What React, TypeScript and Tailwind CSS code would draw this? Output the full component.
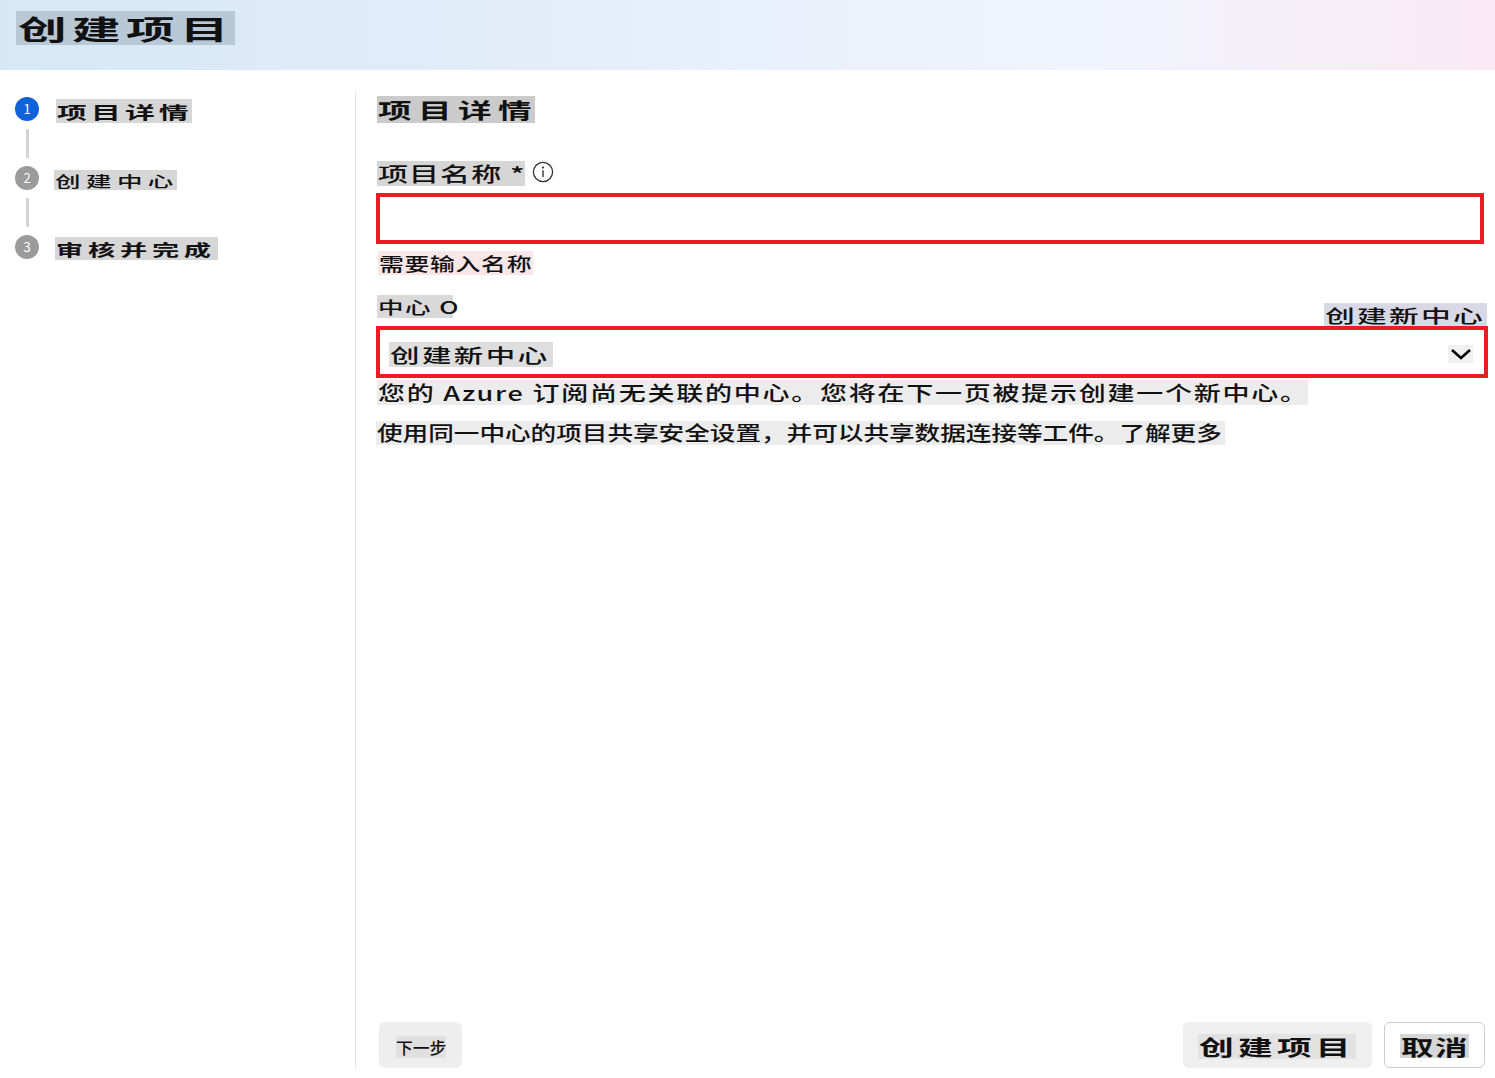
import React from "react";

function Hl({ box, inner, children }: { box: string; inner: string; children: React.ReactNode }) {
  return (
    <span className={"inline-flex items-center shrink-0 overflow-visible " + box}>
      <span className={"inline-block whitespace-nowrap origin-left leading-none " + inner}>{children}</span>
    </span>
  );
}

function InfoIcon() {
  return (
    <svg width="22" height="22" viewBox="0 0 22 22" className="ml-[7px] shrink-0">
      <circle cx="11" cy="11" r="9.6" fill="none" stroke="#333" strokeWidth="1.3" />
      <circle cx="11" cy="6.6" r="1.1" fill="#333" />
      <line x1="11" y1="9.2" x2="11" y2="16" stroke="#333" strokeWidth="1.4" />
    </svg>
  );
}

export default function App() {
  return (
    <div className="w-[1495px] h-[1078px] bg-white text-[#111] font-['Noto_Sans_CJK_SC','Noto_Sans',sans-serif] flex flex-col overflow-hidden">
      <header className="h-[70px] shrink-0 bg-linear-to-r from-[#d6e7f6] via-[#f0f4fd] via-[73%] to-[#f9e9f5] pl-[16px] pt-[11px]">
        <Hl box="w-[219px] h-[34px] bg-[#b8c8d6] pl-[2px]" inner="text-[27px] font-bold tracking-[3px] [transform:scaleX(1.8)]">
          创建项目
        </Hl>
      </header>

      <div className="flex flex-1 pt-[22px] pb-[10px]">
        <aside className="w-[356px] shrink-0 border-r border-[#e3e3e3] pl-[15px] pt-[5px] flex flex-col">
          <div className="flex items-start h-6">
            <div className="w-6 h-6 shrink-0 rounded-full bg-[#0f62d9] text-white text-[13px] flex items-center justify-center">1</div>
            <Hl box="ml-[17px] mt-[2px] w-[136px] h-[24px] bg-[#d6d6d6] pl-[1px]" inner="text-[17px] font-semibold tracking-[2.4px] [transform:scaleX(1.75)]">
              项目详情
            </Hl>
          </div>
          <div className="ml-[11px] w-[3px] h-[29px] my-[8px] bg-[#d4d4d4]" />
          <div className="flex items-start h-6">
            <div className="w-6 h-6 shrink-0 rounded-full bg-[#9b9b9b] text-white text-[13px] flex items-center justify-center">2</div>
            <Hl box="ml-[15px] mt-[4px] w-[123px] h-[20px] bg-[#d6d6d6] pl-[1px]" inner="text-[15px] font-medium tracking-[3.2px] [transform:scaleX(1.7)]">
              创建中心
            </Hl>
          </div>
          <div className="ml-[11px] w-[3px] h-[29px] my-[8px] bg-[#d4d4d4]" />
          <div className="flex items-start h-6">
            <div className="w-6 h-6 shrink-0 rounded-full bg-[#9b9b9b] text-white text-[13px] flex items-center justify-center">3</div>
            <Hl box="ml-[16px] mt-[2px] w-[163px] h-[23px] bg-[#d6d6d6] pl-[1px]" inner="text-[16px] font-semibold tracking-[2.8px] [transform:scaleX(1.7)]">
              审核并完成
            </Hl>
          </div>
        </aside>

        <main className="flex-1 flex flex-col pl-[20px] pr-[7px]">
          <Hl box="mt-[4px] ml-[1px] w-[158px] h-[27px] bg-[#cbcbcb] pl-[1px]" inner="text-[21px] font-bold tracking-[4px] [transform:scaleX(1.6)]">
            项目详情
          </Hl>

          <div className="mt-[38px] flex items-start">
            <Hl box="ml-[1px] w-[148px] h-[25px] bg-[#d6d6d6] pl-[1px]" inner="text-[20px] font-medium tracking-[0.7px] [transform:scaleX(1.5)]">
              项目名称 *
            </Hl>
            <InfoIcon />
          </div>

          <div className="mt-[7px] w-[1108px] h-[51px] border-4 border-[#ed1c24] bg-white" />

          <Hl box="mt-[7px] ml-[2px] w-[155px] h-[24px] bg-[#f9e6e7] pl-[1px]" inner="text-[18px] font-medium tracking-[0.5px] [transform:scaleX(1.38)]">
            需要输入名称
          </Hl>

          <div className="mt-[20px] h-[31px] flex justify-between">
            <Hl box="self-start ml-[1px] w-[76px] h-[23px] bg-[#d9d9d9] pl-[1px]" inner="text-[17px] font-medium tracking-[1px] [transform:scaleX(1.5)]">
              中心 O
            </Hl>
            <Hl box="self-end mr-[1px] w-[163px] h-[23px] bg-[#d9d9e6] pl-[1px]" inner="text-[18px] font-medium tracking-[1.4px] [transform:scaleX(1.65)]">
              创建新中心
            </Hl>
          </div>

          <div className="h-[52px] border-4 border-[#ed1c24] flex items-start justify-between pt-[12px] pl-[9px] pr-[11px]">
            <Hl box="w-[164px] h-[25px] bg-[#dedede] pl-[1px]" inner="text-[19px] font-medium tracking-[1.6px] [transform:scaleX(1.55)]">
              创建新中心
            </Hl>
            <div className="mt-[3px] w-[25px] h-[18px] bg-[#f1f1f1] flex items-center justify-center">
              <svg width="22" height="14" viewBox="0 0 22 14">
                <polyline points="2,3 11,11 20,3" fill="none" stroke="#000" strokeWidth="2.6" strokeLinejoin="miter" />
              </svg>
            </div>
          </div>

          <Hl box="mt-[2px] ml-[1px] w-[931px] h-[25px] bg-[#ececec] pl-[1px]" inner="text-[20px] font-medium tracking-[1.3px] [transform:scaleX(1.35)]">
            您的 Azure 订阅尚无关联的中心。您将在下一页被提示创建一个新中心。
          </Hl>

          <Hl box="mt-[16px] w-[849px] h-[24px] bg-[#ececec] pl-[1px]" inner="text-[20px] font-medium tracking-[0px] [transform:scaleX(1.28)]">
            使用同一中心的项目共享安全设置，并可以共享数据连接等工件。了解更多
          </Hl>

          <div className="mt-auto h-[46px] flex items-stretch">
            <div className="ml-[3px] w-[83px] rounded-md bg-[#eeeeee] flex items-center pl-[17px]">
              <Hl box="mt-[3px] w-[50px] h-[22px] bg-[#e0e0e0]" inner="text-[16px] font-medium [transform:scaleX(1.05)]">
                下一步
              </Hl>
            </div>
            <div className="flex-1" />
            <div className="w-[189px] rounded-md bg-[#efefef] flex items-center pl-[15px]">
              <Hl box="mt-[2px] w-[158px] h-[25px] bg-[#e2e2e2] pl-[1px]" inner="text-[21px] font-bold tracking-[2.6px] [transform:scaleX(1.65)]">
                创建项目
              </Hl>
            </div>
            <div className="ml-[12px] mr-[3px] w-[101px] rounded-md bg-white border border-[#cccccc] flex items-center pl-[15px]">
              <Hl box="mt-[2px] w-[69px] h-[24px] bg-[#d6d6d6] pl-[1px]" inner="text-[21px] font-bold tracking-[0.9px] [transform:scaleX(1.55)]">
                取消
              </Hl>
            </div>
          </div>
        </main>
      </div>
    </div>
  );
}
